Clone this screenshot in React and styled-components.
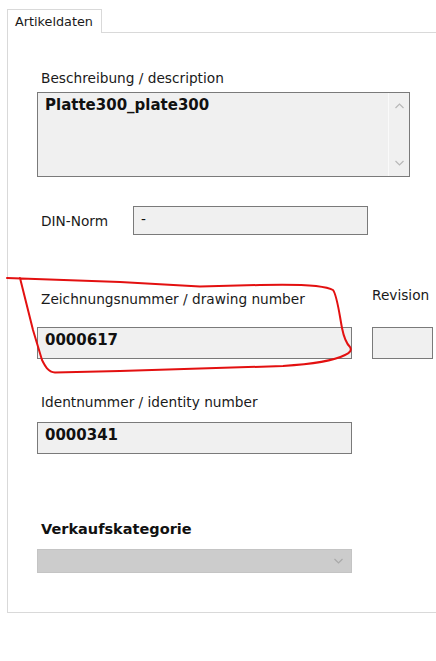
import React from 'react'
import styled, { createGlobalStyle } from 'styled-components'

const Global = createGlobalStyle`
  html, body {
    margin: 0;
    padding: 0;
    background: #ffffff;
  }
  body {
    font-family: "DejaVu Sans", Verdana, sans-serif;
    color: #111;
  }
`

const Page = styled.div`
  position: relative;
  width: 436px;
  height: 661px;
  overflow: hidden;
`

const TabBar = styled.div`
  display: flex;
  padding: 9px 0 0 7px;
`

const Tab = styled.div`
  position: relative;
  z-index: 1;
  box-sizing: border-box;
  width: 95px;
  height: 24px;
  margin-bottom: -1px;
  padding: 4px 0 0 7px;
  border: 1px solid #d9d9d9;
  border-bottom: none;
  background: #fff;
  font-size: 12.8px;
  line-height: 16px;
  color: #1a1a1a;
`

const Panel = styled.div`
  margin-left: 7px;
  border: 1px solid #d9d9d9;
  border-right: none;
  padding: 0 0 39px 29px;
`

const Label = styled.div`
  margin-top: ${p => p.$mt || 0}px;
  padding-left: ${p => (p.$indent === undefined ? 4 : p.$indent)}px;
  font-size: 13.7px;
  line-height: 16px;
  color: #1a1a1a;
  white-space: nowrap;
`

const BoldLabel = styled.div`
  margin-top: ${p => p.$mt || 0}px;
  padding-left: 4px;
  font-size: 14.5px;
  font-weight: bold;
  line-height: 18px;
  color: #111;
`

const Field = styled.div`
  box-sizing: border-box;
  width: ${p => p.$w}px;
  height: ${p => p.$h}px;
  margin-top: ${p => p.$mt || 0}px;
  padding: 3px 0 0 7px;
  border: 1px solid #7a7a7a;
  background: #f0f0f0;
  font-size: ${p => (p.$plain ? '13.7px' : '15px')};
  font-weight: ${p => (p.$plain ? 'normal' : 'bold')};
  line-height: 18px;
  color: #111;
`

const TextArea = styled(Field)`
  display: flex;
  padding: 0;
`

const AreaText = styled.div`
  flex: 1;
  padding: 3px 0 0 7px;
`

const ScrollTrack = styled.div`
  width: 20px;
  border-left: 1px solid #fafafa;
  display: flex;
  flex-direction: column;
  justify-content: space-between;
  align-items: center;
  padding: 10px 0 10px;
`

const InlineRow = styled.div`
  display: flex;
  align-items: center;
  margin-top: ${p => p.$mt}px;
`

const InlineLabel = styled(Label)`
  width: 92px;
`

const Row = styled.div`
  display: flex;
  align-items: flex-end;
  gap: 20px;
  margin-top: ${p => p.$mt}px;
`

const Column = styled.div`
  display: flex;
  flex-direction: column;
`

const Select = styled.div`
  box-sizing: border-box;
  width: 315px;
  height: 24px;
  margin-top: ${p => p.$mt}px;
  border: 1px solid #c4c4c4;
  background: #cccccc;
  display: flex;
  align-items: center;
  justify-content: flex-end;
  padding-right: 8px;
`

const Overlay = styled.svg`
  position: absolute;
  left: 0;
  top: 0;
  pointer-events: none;
`

const Chevron = ({ up, color = '#b8b8b8' }) => (
  <svg width="9" height="6" viewBox="0 0 9 6">
    <path
      d={up ? 'M0.5 5 L4.5 1 L8.5 5' : 'M0.5 1 L4.5 5 L8.5 1'}
      fill="none"
      stroke={color}
      strokeWidth="1.2"
    />
  </svg>
)

const App = () => {
  return (
    <Page>
      <Global />
      <TabBar>
        <Tab>Artikeldaten</Tab>
      </TabBar>
      <Panel>
        <Label $mt={37}>Beschreibung / description</Label>
        <TextArea $w={373} $h={85} $mt={6}>
          <AreaText>Platte300_plate300</AreaText>
          <ScrollTrack>
            <Chevron up />
            <Chevron />
          </ScrollTrack>
        </TextArea>

        <InlineRow $mt={29}>
          <InlineLabel>DIN-Norm</InlineLabel>
          <Field $w={235} $h={29} $plain>-</Field>
        </InlineRow>

        <Row $mt={52}>
          <Column>
            <Label>Zeichnungsnummer / drawing number</Label>
            <Field $w={315} $h={32} $mt={20}>0000617</Field>
          </Column>
          <Column>
            <Label $indent={0}>Revision</Label>
            <Field $w={61} $h={32} $mt={24} />
          </Column>
        </Row>

        <Label $mt={35}>Identnummer / identity number</Label>
        <Field $w={315} $h={32} $mt={12}>0000341</Field>

        <BoldLabel $mt={66}>Verkaufskategorie</BoldLabel>
        <Select $mt={11}>
          <Chevron color="#a9a9a9" />
        </Select>
      </Panel>

      <Overlay width="436" height="661" viewBox="0 0 436 661">
        <path
          d="M7 278 L120 282 L200 286.5 L260 285 C300 284 325 285 333 290 C337 295 339 312 342 328 C344 338 347 344 350 347 C352 350 350 353 345 355 C335 360 315 364 283 366 L120 371 L55 372.5 C48 372 45 366 42 360 L33 330 L23 290 L20 278"
          fill="none"
          stroke="#e31010"
          strokeWidth="2"
          strokeLinejoin="round"
          strokeLinecap="round"
        />
      </Overlay>
    </Page>
  )
}

export default App
